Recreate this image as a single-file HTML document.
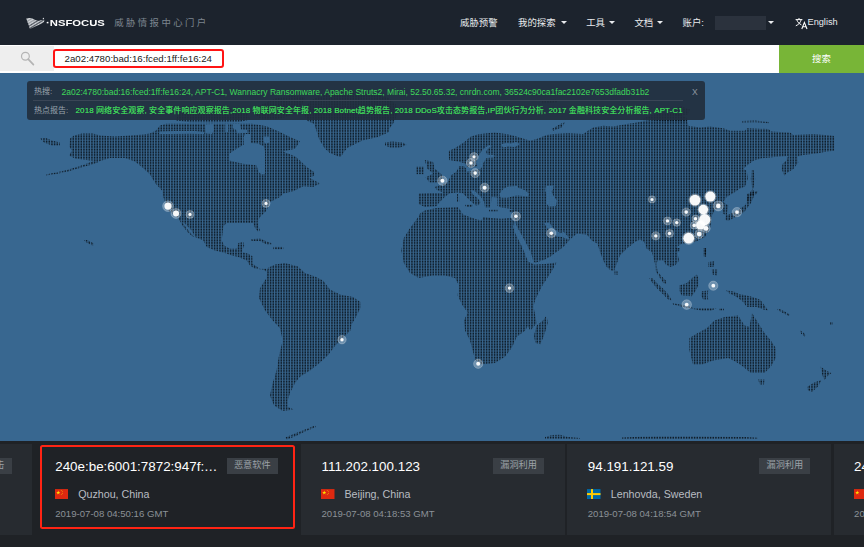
<!DOCTYPE html>
<html lang="zh">
<head>
<meta charset="utf-8">
<title>NSFOCUS 威胁情报中心门户</title>
<style>
*{box-sizing:border-box;margin:0;padding:0}
html,body{width:864px;height:547px;overflow:hidden;background:#1f2226;font-family:"Liberation Sans","Noto Sans CJK SC",sans-serif;}
#hdr{position:absolute;left:0;top:0;width:864px;height:45px;background:#1c232d;}
#logo{position:absolute;left:26px;top:17px;width:19.5px;height:12.6px}
#brand{position:absolute;left:46.2px;top:17.6px;font-size:8.8px;line-height:11px;font-weight:bold;color:#fff;transform:scaleX(1.28);transform-origin:0 50%;letter-spacing:0;white-space:nowrap}
#sub{position:absolute;left:114.3px;top:16.5px;font-size:9.4px;line-height:12px;color:#7d858f;letter-spacing:2.4px;white-space:nowrap}
.nav{position:absolute;top:16px;font-size:9.4px;line-height:13px;color:#e9ebee;white-space:nowrap}
.car{position:absolute;top:21.3px;width:0;height:0;border-left:3.1px solid transparent;border-right:3.1px solid transparent;border-top:3.4px solid #e9ebee}
#blur{position:absolute;left:715px;top:16px;width:51px;height:14px;background:#2b323d;filter:blur(.6px)}
#sbar{position:absolute;left:0;top:45px;width:864px;height:27.6px;background:#fff}
#sico{position:absolute;left:0;top:1.2px;width:53.5px;height:25px;background:#eeeeee}
#sred{position:absolute;left:52.5px;top:3.6px;width:171px;height:19px;border:2px solid #ff1414;border-radius:3px}
#stxt{position:absolute;left:64.6px;top:8px;font-size:9.7px;line-height:12px;color:#222;white-space:nowrap}
#sbtn{position:absolute;left:779px;top:0;width:85px;height:27.6px;background:#78b537;color:#fff;font-size:9.4px;line-height:27.6px;text-align:center}
#map{position:absolute;left:0;top:72.6px;width:864px;height:369px;background:#386790}
#hot{position:absolute;left:27px;top:81px;width:678px;height:38.6px;background:rgba(33,45,60,0.9);border-radius:3px;font-size:8px;white-space:nowrap}
#hot .r{position:absolute;left:7px;height:12px;line-height:12px;color:#9aa3ad}
#hot .g{color:#3fd95a}
#hot .x{position:absolute;left:665px;top:4.5px;font-size:8.6px;line-height:12px;color:#8c96a1}
#hot .d{position:absolute;left:6px;top:19.4px;width:650px;height:1px;background:#3a4656}
#cards{position:absolute;left:0;top:441px;width:864px;height:106px;background:#1f2226}
.card{position:absolute;top:3.3px;width:264px;height:90.5px;background:#272b30}
.ip{position:absolute;left:20.6px;top:14.8px;font-size:13.4px;line-height:16px;color:#fff;white-space:nowrap}
.tag{position:absolute;left:192.2px;top:14.2px;width:51px;height:15.2px;background:#3a3f45;color:#9ca2a8;font-size:9.2px;line-height:15.2px;text-align:center;white-space:nowrap}
.flag{position:absolute;left:20.3px;top:44.8px;width:13.5px;height:10.2px}
.city{position:absolute;left:43.6px;top:43.3px;font-size:10.7px;line-height:13px;color:#b9bdc2;white-space:nowrap}
.dt{position:absolute;left:20.6px;top:64.1px;font-size:9.6px;line-height:12px;color:#8b9197;white-space:nowrap}
#redc{position:absolute;left:40px;top:4px;width:255px;height:84.3px;border:2.2px solid #ff2414;border-radius:2.5px}
</style>
</head>
<body>
<div id="hdr">
<svg id="logo" viewBox="0 0 20 13"><defs><pattern id="lp" width="1.5" height="1.5" patternUnits="userSpaceOnUse" patternTransform="rotate(18)"><rect width="1.5" height="0.95" fill="#d4d7db"/></pattern></defs><path d="M0.2 1.6 L2.6 1.1 L6 1.4 L9.5 3.2 L13 3.9 L16.5 3.2 L18.9 2.6 L18.6 5.2 L16 7 L12.5 8.4 L8.8 10 L5.5 11.6 L3.6 12 L3 9 L1.6 5.4 Z" fill="url(#lp)"/><path d="M0.2 1.6 L2.6 1.1 L6 1.4 L9.5 3.2 L6 6 L3 9 L1.6 5.4 Z" fill="#d4d7db" opacity="0.55"/><circle cx="17.9" cy="1.6" r="0.7" fill="#d4d7db"/></svg>
<div id="brand">·NSFOCUS</div>
<div id="sub">威胁情报中心门户</div>
<div class="nav" style="left:460px">威胁预警</div>
<div class="nav" style="left:518px">我的探索</div><i class="car" style="left:560.5px"></i>
<div class="nav" style="left:586.2px">工具</div><i class="car" style="left:608.5px"></i>
<div class="nav" style="left:634.4px">文档</div><i class="car" style="left:656.8px"></i>
<div class="nav" style="left:682.5px">账户:</div><div id="blur"></div><i class="car" style="left:767.5px"></i>
<svg style="position:absolute;left:795px;top:16.5px;width:13px;height:13px" viewBox="0 0 13 13"><g fill="none" stroke="#fff" stroke-width="1"><path d="M0.6 2.6 H7.4 M4 1 V2.6 M6.2 2.6 C5.6 5.4 3.6 7.6 0.8 8.8 M1.8 2.8 C2.6 5.2 4.2 6.8 6.4 7.8"/><path d="M6.8 12 L9.4 5.4 L12 12 M7.7 9.8 H11.1" stroke-width="1.1"/></g></svg>
<div class="nav" style="left:807.5px;font-size:9.2px">English</div>
</div>
<div id="sbar">
<div id="sico"><svg style="position:absolute;left:19px;top:4px;width:18px;height:18px" viewBox="0 0 18 18"><circle cx="6.4" cy="6.2" r="3.9" fill="none" stroke="#b4b4b4" stroke-width="1.2"/><path d="M9.2 9.2 L14.4 14.6" stroke="#b4b4b4" stroke-width="1.7" stroke-linecap="round"/></svg></div>
<div id="sred"></div>
<div id="stxt">2a02:4780:bad:16:fced:1ff:fe16:24</div>
<div id="sbtn">搜索</div>
</div>
<div id="map">
<svg width="864" height="369" viewBox="0 0 864 369" style="position:absolute;left:0;top:0">
<defs><pattern id="dp" width="8" height="8" patternUnits="userSpaceOnUse" x="0" y="0.6"><g fill="#040a10"><rect x="0.500" y="0.500" width="1.55" height="1.55"/><rect x="0.500" y="3.167" width="1.55" height="1.55"/><rect x="0.500" y="5.833" width="1.55" height="1.55"/><rect x="3.167" y="0.500" width="1.55" height="1.55"/><rect x="3.167" y="3.167" width="1.55" height="1.55"/><rect x="3.167" y="5.833" width="1.55" height="1.55"/><rect x="5.833" y="0.500" width="1.55" height="1.55"/><rect x="5.833" y="3.167" width="1.55" height="1.55"/><rect x="5.833" y="5.833" width="1.55" height="1.55"/></g></pattern><radialGradient id="hg"><stop offset="0" stop-color="#fff" stop-opacity="1"/><stop offset="0.42" stop-color="#fff" stop-opacity="0.95"/><stop offset="0.5" stop-color="#fff" stop-opacity="0.55"/><stop offset="1" stop-color="#fff" stop-opacity="0.3"/></radialGradient></defs>
<g fill="url(#dp)" fill-rule="evenodd"><path d="M40.0,65.4 46.0,64.9 52.0,67.4 60.0,69.4 60.0,72.4 52.0,72.4 44.0,69.4Z"/><path d="M100.0,88.4 92.0,91.4 83.0,93.9 68.0,98.4 56.0,100.9 46.0,102.4 46.0,101.4 67.0,96.9 83.0,91.9 95.0,87.4Z"/><path d="M70.0,65.4 74.0,62.4 82.0,60.4 93.0,60.4 100.0,62.4 115.0,63.4 130.0,62.4 143.0,61.4 150.0,60.4 156.0,57.4 160.0,52.4 166.0,50.7 190.0,50.7 215.0,50.7 235.0,50.7 252.0,50.7 266.7,53.2 280.0,59.1 290.0,64.1 300.0,68.2 295.0,75.7 283.0,78.4 295.0,83.2 300.0,87.4 306.7,94.1 314.0,99.1 315.0,102.4 309.0,104.4 320.0,110.4 313.0,113.9 303.3,113.2 293.3,118.2 283.3,120.4 280.0,124.1 270.0,129.1 266.7,137.4 260.0,144.1 257.5,148.9 260.0,157.4 258.3,159.1 255.0,154.9 253.3,149.9 226.7,149.9 223.3,153.2 222.5,160.7 221.7,167.4 224.2,172.4 230.0,175.7 236.7,175.7 238.3,169.9 243.3,169.1 244.2,172.4 241.7,179.1 248.3,180.7 252.5,183.2 252.5,190.7 260.0,195.7 266.7,195.7 268.0,197.9 266.7,199.1 263.3,196.6 255.0,195.7 250.0,192.4 246.7,187.4 238.3,184.1 231.7,182.4 225.0,179.9 215.0,177.4 206.7,174.1 203.3,167.4 195.0,164.1 191.7,157.4 185.0,150.7 182.0,148.4 186.0,154.4 191.0,160.4 194.5,163.9 193.0,163.9 188.0,159.4 183.0,153.4 179.5,147.4 178.3,144.9 168.3,137.4 163.3,124.1 162.0,117.4 155.0,109.9 150.0,101.4 143.0,94.9 135.0,88.4 125.0,84.9 110.0,84.9 100.0,87.9 90.0,87.4 75.0,85.4 69.0,82.4 72.0,77.4 69.0,73.4Z M229.0,80.7 229.0,87.4 243.0,90.7 256.7,92.4 258.3,99.1 261.7,101.6 265.0,100.7 265.0,87.4 265.0,78.4 264.0,73.4 258.0,70.4 250.0,69.9 250.0,60.9 245.0,60.9 243.5,64.4 244.0,71.4 236.7,75.7Z M205.0,51.4 213.0,50.9 214.0,56.4 212.0,60.9 206.0,60.4Z M233.0,50.4 240.0,50.4 241.0,56.4 247.0,56.9 247.0,59.9 237.0,60.4 236.0,56.4 233.0,55.4Z M263.5,63.4 269.0,63.4 270.0,69.4 265.0,70.4 263.5,67.4Z M225.3,50.4 228.0,50.4 228.0,58.9 225.3,58.9Z M160.0,58.4 175.0,57.9 195.0,57.9 204.0,58.9 204.0,60.9 190.0,60.7 170.0,60.9 159.0,60.9Z"/><path d="M318.0,23.4 330.0,19.4 350.0,17.4 372.0,19.4 388.0,24.4 396.0,31.4 397.0,39.4 395.8,45.2 393.0,50.7 388.9,56.3 388.9,59.1 383.3,61.8 377.8,63.9 362.5,67.4 358.3,69.4 347.2,75.0 343.8,79.2 341.0,83.7 338.9,83.7 329.9,79.9 325.0,75.7 322.2,71.6 319.4,66.7 317.4,61.2 316.0,56.3 313.9,50.7 307.6,47.9 304.0,41.4 306.0,33.4 311.0,27.4Z"/><path d="M385.0,69.4 392.0,68.4 403.0,69.4 406.5,71.9 400.0,74.4 390.0,74.4 385.0,72.4Z"/><path d="M250.8,166.2 260.0,165.4 266.7,168.6 271.7,170.2 271.7,171.4 266.7,171.4 260.0,168.0 251.7,168.0Z"/><path d="M273.3,173.9 283.3,173.9 283.3,176.2 273.3,176.2Z"/><path d="M267.7,195.0 275.0,191.4 285.0,190.0 298.0,193.4 305.0,200.0 315.0,203.4 323.0,207.4 330.0,216.4 340.0,221.4 353.0,223.9 360.5,228.9 360.5,235.1 355.4,245.1 351.6,251.4 350.4,257.4 343.0,264.9 335.3,272.4 327.8,282.4 317.8,291.4 310.0,297.4 300.0,303.8 295.0,310.1 290.0,320.1 287.7,327.4 287.7,333.9 294.0,336.4 282.7,337.9 274.0,332.4 270.0,322.4 272.7,310.1 276.5,297.4 279.0,282.4 282.7,267.4 280.0,255.2 272.7,247.4 265.0,237.4 259.0,225.1 260.0,215.1 266.5,205.0Z"/><path d="M285.0,364.4 295.0,360.4 305.0,356.4 315.0,352.4 316.0,353.9 305.0,358.4 296.0,362.9 287.0,366.4Z"/><path d="M417.5,144.9 420.0,140.4 424.7,137.4 436.3,134.9 458.0,134.1 460.5,137.4 463.0,141.6 474.7,145.7 481.3,147.4 483.0,144.1 491.3,144.9 501.3,145.7 513.0,144.9 514.0,149.4 513.0,154.1 516.3,162.4 523.0,175.7 528.0,188.4 534.2,191.6 545.0,190.9 556.5,189.4 554.0,194.4 549.0,202.4 543.0,211.4 538.5,219.9 535.0,227.4 533.5,233.4 535.3,242.7 536.6,250.2 530.3,257.7 527.8,252.9 525.3,257.4 516.5,264.0 515.3,267.4 511.5,275.0 505.0,283.8 495.0,290.0 480.0,291.4 475.0,286.4 472.7,277.4 470.0,267.4 465.0,257.4 464.0,247.4 467.7,239.4 462.7,232.7 457.6,222.6 459.0,212.6 455.0,205.1 445.0,202.6 432.6,202.6 418.8,205.1 410.0,200.1 403.8,190.1 401.3,177.4 403.8,165.0 410.0,155.0Z"/><path d="M546.6,242.4 547.9,249.9 544.0,262.4 540.4,271.2 535.3,270.0 534.0,262.4 536.6,252.4 542.9,247.4Z"/><path d="M689.4,265.0 695.6,261.2 707.0,255.0 714.4,247.4 725.7,243.7 738.2,242.4 744.5,252.4 749.5,253.7 752.0,239.9 758.3,250.0 764.5,260.0 770.8,267.4 775.8,275.0 775.8,285.0 770.8,293.8 764.5,300.1 750.8,300.1 743.2,293.8 735.7,288.8 728.2,285.0 713.2,287.4 702.0,291.4 693.0,291.4 689.4,277.4Z"/><path d="M758.0,306.4 764.5,306.4 764.0,311.4 760.0,311.4Z"/><path d="M820.5,293.4 826.0,297.4 831.5,299.9 827.0,303.4 824.5,306.9 822.0,301.4Z"/><path d="M807.0,313.9 814.0,309.4 821.5,306.9 818.0,313.4 812.0,318.9 808.0,317.4Z"/><path d="M725.8,217.4 733.3,218.2 738.3,220.7 750.0,223.2 760.0,226.6 763.3,230.7 768.3,237.4 763.3,236.6 756.7,234.1 746.7,234.1 743.3,229.1 736.7,224.1 730.0,220.7Z"/><path d="M679.2,212.4 686.7,209.9 693.3,204.1 696.7,201.6 699.2,205.7 698.3,212.4 695.0,219.1 691.7,223.2 681.7,222.4 679.2,217.4Z"/><path d="M649.2,204.9 652.5,204.9 657.5,210.7 663.3,215.7 669.2,222.4 671.7,227.4 668.3,226.6 662.5,220.7 656.7,214.9 651.7,209.1Z"/><path d="M672.5,229.9 680.0,231.6 686.7,232.4 693.3,234.9 703.3,234.9 716.7,234.9 711.7,237.4 701.7,237.4 691.7,235.7 680.0,233.2 673.0,231.6Z"/><path d="M719.0,235.4 724.0,235.4 724.0,237.4 719.0,237.4Z"/><path d="M701.7,218.2 708.3,217.4 707.5,222.4 708.3,226.6 703.3,226.6 700.8,222.4Z"/><path d="M703.3,174.9 707.0,174.9 706.7,184.1 703.3,183.2Z"/><path d="M751.5,116.9 747.5,124.1 745.5,131.9 740.7,134.9 732.5,139.9 725.7,142.4 724.8,146.4 728.0,147.9 733.8,144.9 744.0,139.2 751.0,129.9 755.0,120.7 754.5,117.4Z"/><path d="M746.7,121.1 758.3,117.7 756.7,121.1 750.0,122.7 750.8,127.4 746.7,127.4Z"/><path d="M751.7,96.9 753.5,96.9 755.2,106.1 753.5,114.4 752.5,117.7 750.8,106.1Z"/><path d="M424.7,87.1 433.0,88.7 434.7,95.4 440.5,100.4 443.8,103.7 441.3,109.4 429.7,109.6 425.5,104.6 433.0,100.4 427.2,95.4Z"/><path d="M416.3,93.7 423.8,93.7 423.8,101.2 416.3,101.2Z"/><path d="M418.0,120.4 430.0,119.9 443.5,119.9 437.0,116.9 434.5,113.9 441.0,111.9 448.0,108.7 451.3,102.1 456.3,98.7 458.0,95.4 459.0,92.9 464.0,92.9 466.0,95.4 466.3,98.7 474.0,97.4 481.3,95.4 483.0,90.4 486.3,84.9 494.0,84.4 494.5,81.9 487.0,81.4 486.0,78.4 488.0,75.4 492.0,72.9 489.0,71.9 486.0,73.9 482.0,77.4 478.0,83.4 476.0,89.4 477.5,92.9 471.0,94.9 466.0,93.4 465.5,90.4 458.0,88.4 449.0,87.1 448.8,77.9 456.0,74.4 464.7,68.7 470.5,63.7 478.0,61.2 494.7,59.4 508.0,61.2 520.0,64.4 530.0,67.7 536.7,66.1 546.7,61.9 553.3,61.1 568.3,60.2 583.3,61.1 586.7,58.6 593.3,54.4 603.3,52.7 613.3,53.6 626.7,51.1 636.7,49.4 646.7,47.7 664.0,46.9 686.7,46.9 687.5,49.4 688.3,52.7 700.0,54.4 710.0,53.6 723.3,55.2 730.0,57.7 745.0,57.7 746.7,55.2 768.3,56.1 771.7,58.6 790.0,59.4 793.3,61.9 813.3,61.1 833.3,62.7 835.0,64.4 835.0,77.7 826.7,78.6 818.3,80.2 803.3,81.9 797.0,83.4 798.3,89.4 793.3,96.1 786.7,100.2 784.2,102.7 781.7,96.1 782.5,91.1 786.7,86.9 788.0,82.9 780.0,83.6 770.0,84.4 761.7,85.2 753.3,87.7 746.7,92.7 743.3,96.1 746.7,97.7 748.0,105.4 745.0,113.4 740.0,115.4 735.0,119.1 726.7,124.1 723.3,129.1 728.3,132.4 726.7,142.4 723.3,140.7 721.0,134.4 715.0,136.4 712.0,142.4 711.0,149.4 710.0,155.7 705.0,164.1 695.0,169.1 681.7,170.7 676.7,174.1 678.3,175.7 677.5,180.7 679.2,187.4 675.0,192.4 670.0,194.1 665.8,191.6 663.3,187.4 657.5,187.4 656.5,190.9 657.5,198.2 660.8,202.4 665.8,207.4 666.7,210.7 663.3,209.9 660.0,204.9 655.8,198.2 655.0,190.7 653.3,184.1 651.7,179.1 646.7,175.7 644.2,169.1 640.0,166.6 635.0,169.1 626.7,175.7 620.0,182.4 616.7,190.7 614.0,197.9 611.0,197.4 606.7,194.1 603.3,187.4 600.0,179.1 597.5,170.7 591.7,167.4 586.7,161.6 576.7,160.7 570.0,166.6 563.3,174.1 556.7,179.1 550.8,183.2 545.0,186.6 535.0,189.9 533.0,187.4 531.3,180.7 524.7,167.4 516.3,152.4 515.0,146.4 513.0,144.9 512.5,136.4 508.0,135.4 501.0,134.4 497.5,132.9 497.5,124.4 491.5,124.1 491.0,130.4 490.0,134.4 485.0,134.4 484.0,128.4 481.0,123.9 477.0,119.9 474.0,117.4 470.5,116.9 473.0,121.4 478.0,125.4 480.5,128.9 479.0,131.9 476.0,132.4 474.0,130.9 470.0,127.4 466.0,123.4 462.5,119.9 457.2,119.4 449.7,120.2 444.7,124.1 439.7,129.1 436.3,133.2 424.7,134.1 418.0,130.7Z M499.5,120.8 503.4,115.8 507.9,113.6 516.8,113.0 519.0,115.2 524.6,116.9 529.0,120.8 528.0,123.6 517.9,122.4 513.4,123.0 507.9,124.7 500.6,124.7Z M545.8,113.0 553.6,112.4 553.0,116.4 551.3,118.6 553.6,123.0 556.9,127.4 555.8,133.1 549.0,133.6 545.8,129.7 546.9,123.0 545.2,117.4Z M544.2,149.9 549.2,149.4 553.3,154.9 560.0,159.9 564.0,158.9 567.0,162.4 570.0,166.6 566.0,165.4 561.7,163.9 557.0,163.4 551.0,158.4 546.5,153.9Z M501.0,71.4 506.0,69.9 511.0,70.4 516.0,68.9 520.0,70.9 515.0,73.9 508.0,73.4 503.0,74.4Z"/><path d="M614.5,197.4 617.5,197.9 617.5,201.9 614.5,201.4Z"/><path d="M704.5,175.7 706.8,175.7 706.0,182.4 704.3,180.9Z"/><path d="M676.0,174.9 680.0,174.9 679.5,178.4 676.0,177.9Z"/><path d="M622.0,364.6 640.0,363.8 660.0,363.4 690.0,363.4 720.0,363.8 745.0,364.0 758.0,364.8 758.0,366.0 622.0,366.0Z"/><path d="M545.0,363.9 552.0,361.9 560.0,361.7 568.0,363.9 580.0,364.9 580.0,365.9 545.0,365.7Z"/><path d="M551.7,56.1 561.7,50.2 565.0,49.4 561.7,54.4 553.3,57.7Z"/><path d="M708.3,189.1 715.0,188.2 713.3,194.1 708.3,194.1Z"/><path d="M711.7,196.6 717.5,196.6 716.7,202.4 712.5,201.6Z"/><path d="M742.0,48.0 755.0,47.6 769.0,49.0 769.0,50.2 755.0,49.2 742.0,49.4Z"/><path d="M457.0,120.9 459.0,120.9 459.2,128.9 457.0,128.9Z"/><path d="M465.0,131.7 472.5,131.7 472.0,133.9 466.0,133.9Z"/><path d="M509.0,137.1 513.0,136.9 513.0,138.9 509.0,138.9Z"/><path d="M489.0,136.7 497.5,136.7 497.5,138.4 489.0,138.4Z"/><path d="M84.0,166.9 87.0,166.9 94.0,170.4 94.0,172.4 91.0,171.9 85.0,168.4Z"/><path d="M778.0,235.4 783.0,237.4 790.0,241.4 789.0,242.9 782.0,239.4 777.5,236.9Z"/><path d="M800.0,257.4 803.0,258.9 806.0,262.4 804.5,263.4 801.0,260.4Z"/><path d="M830.0,249.4 833.0,249.4 833.0,251.9 830.0,251.9Z"/><path d="M262.0,31.4 275.0,25.4 292.0,22.4 305.0,24.4 302.0,31.4 296.0,37.4 288.0,43.4 276.0,46.4 262.0,46.4 255.0,41.4 257.0,35.4Z"/><path d="M178.0,39.4 195.0,35.4 215.0,33.4 235.0,35.4 248.0,40.4 250.0,46.4 240.0,48.9 215.0,49.2 190.0,49.2 176.0,47.4Z"/><path d="M672.0,35.4 682.0,33.4 690.0,36.4 688.0,41.4 678.0,43.4 671.0,40.4Z"/><path d="M640.0,46.9 650.0,42.4 664.0,39.4 680.0,41.4 688.0,45.4 687.0,48.4 664.0,48.4Z"/><path d="M540.0,27.4 556.0,26.4 558.0,29.4 542.0,30.4Z"/><path d="M452.0,30.4 466.0,28.4 474.0,32.4 468.0,37.4 456.0,36.4Z"/></g>
<g fill="#fff" fill-opacity="0.27" stroke="#fff" stroke-opacity="0.28" stroke-width="0.8"><circle cx="168.0" cy="133.1" r="5.4"/><circle cx="176.0" cy="140.4" r="5"/><circle cx="190.0" cy="141.4" r="4"/><circle cx="266.0" cy="130.4" r="4"/><circle cx="342.0" cy="266.7" r="4.2"/><circle cx="442.4" cy="107.8" r="4.7"/><circle cx="474.0" cy="83.8" r="4.2"/><circle cx="471.0" cy="90.0" r="4.6"/><circle cx="475.2" cy="100.1" r="4.5"/><circle cx="484.6" cy="114.7" r="4.5"/><circle cx="515.9" cy="143.3" r="4.6"/><circle cx="551.3" cy="160.2" r="4.6"/><circle cx="509.5" cy="215.1" r="4.4"/><circle cx="478.2" cy="290.8" r="4.6"/><circle cx="652.0" cy="126.4" r="3.6"/><circle cx="695.0" cy="127.1" r="6.2"/><circle cx="710.3" cy="123.6" r="5.8"/><circle cx="703.3" cy="136.6" r="5.6"/><circle cx="718.3" cy="132.9" r="5"/><circle cx="737.0" cy="139.1" r="4.7"/><circle cx="686.2" cy="139.1" r="4.2"/><circle cx="704.7" cy="146.6" r="6.4"/><circle cx="700.5" cy="152.1" r="5.4"/><circle cx="694.2" cy="152.4" r="3.8"/><circle cx="695.5" cy="145.7" r="3.6"/><circle cx="667.5" cy="147.9" r="4"/><circle cx="676.7" cy="149.6" r="3.8"/><circle cx="655.8" cy="162.9" r="4.2"/><circle cx="669.5" cy="160.4" r="4"/><circle cx="688.7" cy="165.2" r="6.2"/><circle cx="699.2" cy="161.1" r="4.4"/><circle cx="706.0" cy="155.4" r="4.2"/><circle cx="713.3" cy="212.7" r="4.6"/><circle cx="686.7" cy="231.6" r="4.8"/></g>
<g fill="#fff" fill-opacity="0.95" style="filter:blur(0.5px)"><circle cx="168.0" cy="133.1" r="3.6"/><circle cx="176.0" cy="140.4" r="3"/><circle cx="190.0" cy="141.4" r="1.6"/><circle cx="266.0" cy="130.4" r="1.6"/><circle cx="342.0" cy="266.7" r="1.7"/><circle cx="442.4" cy="107.8" r="2"/><circle cx="474.0" cy="83.8" r="1.6"/><circle cx="471.0" cy="90.0" r="1.7"/><circle cx="475.2" cy="100.1" r="1.8"/><circle cx="484.6" cy="114.7" r="2"/><circle cx="515.9" cy="143.3" r="1.8"/><circle cx="551.3" cy="160.2" r="1.8"/><circle cx="509.5" cy="215.1" r="1.7"/><circle cx="478.2" cy="290.8" r="2"/><circle cx="652.0" cy="126.4" r="1.5"/><circle cx="695.0" cy="127.1" r="5.4"/><circle cx="710.3" cy="123.6" r="5"/><circle cx="703.3" cy="136.6" r="4.8"/><circle cx="718.3" cy="132.9" r="2.3"/><circle cx="737.0" cy="139.1" r="1.9"/><circle cx="686.2" cy="139.1" r="1.8"/><circle cx="704.7" cy="146.6" r="5.6"/><circle cx="700.5" cy="152.1" r="4.5"/><circle cx="694.2" cy="152.4" r="1.8"/><circle cx="695.5" cy="145.7" r="1.8"/><circle cx="667.5" cy="147.9" r="1.7"/><circle cx="676.7" cy="149.6" r="1.7"/><circle cx="655.8" cy="162.9" r="1.7"/><circle cx="669.5" cy="160.4" r="1.7"/><circle cx="688.7" cy="165.2" r="5.4"/><circle cx="699.2" cy="161.1" r="2.4"/><circle cx="706.0" cy="155.4" r="2.4"/><circle cx="713.3" cy="212.7" r="1.9"/><circle cx="686.7" cy="231.6" r="1.9"/></g>
</svg>
</div>
<div id="hot">
<div class="r" style="top:4.5px">热搜:</div><div class="r g" id="r1" style="top:4.5px;left:34.5px;font-size:8.5px">2a02:4780:bad:16:fced:1ff:fe16:24, APT-C1, Wannacry Ransomware, Apache Struts2, Mirai, 52.50.65.32, cnrdn.com, 36524c90ca1fac2102e7653dfadb31b2</div>
<div class="d"></div>
<div class="r" style="top:23.5px">热点报告:</div><div class="r g" id="r2" style="top:23.5px;left:48.6px;letter-spacing:0.08px;text-shadow:0 0 0.6px rgba(63,217,90,0.9)">2018 网络安全观察, 安全事件响应观察报告,2018 物联网安全年报, 2018 Botnet趋势报告, 2018 DDoS攻击态势报告,IP团伙行为分析, 2017 金融科技安全分析报告, APT-C1</div>
<div class="x">X</div>
</div>
<div id="cards">
<div class="card" style="left:-231.7px"><div class="tag">网络攻击</div></div>
<div class="card" style="left:34.6px;background:transparent"><div class="ip">240e:be:6001:7872:947f:…</div><div class="tag">恶意软件</div>
<svg class="flag" viewBox="0 0 27 20"><rect width="27" height="20" fill="#de2910"/><path d="M6.5 3 l1 3h3.1l-2.5 1.9 1 3-2.6-1.9-2.6 1.9 1-3L2.4 6h3.1z" fill="#ffde00"/><g fill="#ffde00"><circle cx="12.5" cy="2.6" r=".9"/><circle cx="14.6" cy="5" r=".9"/><circle cx="14.6" cy="8.2" r=".9"/><circle cx="12.5" cy="10.6" r=".9"/></g></svg>
<div class="city">Quzhou, China</div><div class="dt">2019-07-08 04:50:16 GMT</div></div>
<div class="card" style="left:300.9px"><div class="ip">111.202.100.123</div><div class="tag">漏洞利用</div>
<svg class="flag" viewBox="0 0 27 20"><rect width="27" height="20" fill="#de2910"/><path d="M6.5 3 l1 3h3.1l-2.5 1.9 1 3-2.6-1.9-2.6 1.9 1-3L2.4 6h3.1z" fill="#ffde00"/><g fill="#ffde00"><circle cx="12.5" cy="2.6" r=".9"/><circle cx="14.6" cy="5" r=".9"/><circle cx="14.6" cy="8.2" r=".9"/><circle cx="12.5" cy="10.6" r=".9"/></g></svg>
<div class="city">Beijing, China</div><div class="dt">2019-07-08 04:18:53 GMT</div></div>
<div class="card" style="left:567.2px"><div class="ip">94.191.121.59</div><div class="tag">漏洞利用</div>
<svg class="flag" viewBox="0 0 27 20"><rect width="27" height="20" fill="#006aa7"/><rect x="8" width="4" height="20" fill="#fecc00"/><rect y="8" width="27" height="4" fill="#fecc00"/></svg>
<div class="city">Lenhovda, Sweden</div><div class="dt">2019-07-08 04:18:54 GMT</div></div>
<div class="card" style="left:833.5px"><div class="ip">240e:be:6001</div>
<svg class="flag" viewBox="0 0 27 20"><rect width="27" height="20" fill="#de2910"/><path d="M6.5 3 l1 3h3.1l-2.5 1.9 1 3-2.6-1.9-2.6 1.9 1-3L2.4 6h3.1z" fill="#ffde00"/></svg>
<div class="dt">2019-07-08 04:50:16 GMT</div></div>
<div id="redc"></div>
</div>
</body>
</html>
